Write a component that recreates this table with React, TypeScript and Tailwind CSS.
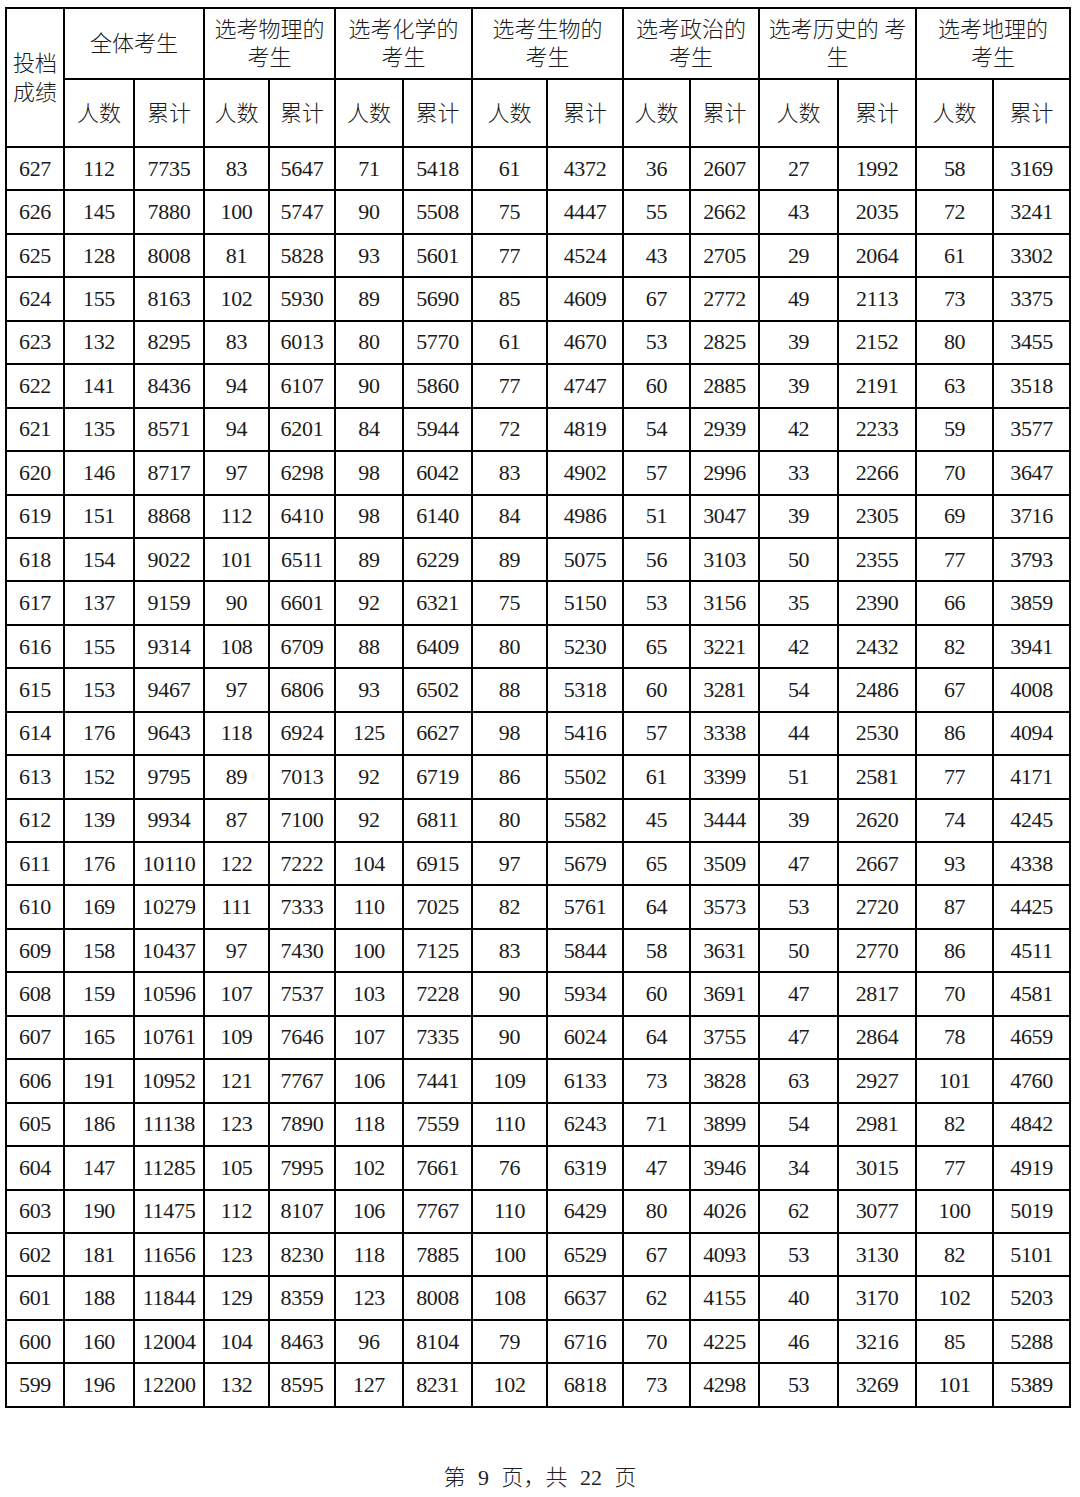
const rows: number[][] = [
  [627, 112, 7735, 83, 5647, 71, 5418, 61, 4372, 36, 2607, 27, 1992, 58, 3169],
  [626, 145, 7880, 100, 5747, 90, 5508, 75, 4447, 55, 2662, 43, 2035, 72, 3241],
  [625, 128, 8008, 81, 5828, 93, 5601, 77, 4524, 43, 2705, 29, 2064, 61, 3302],
  [624, 155, 8163, 102, 5930, 89, 5690, 85, 4609, 67, 2772, 49, 2113, 73, 3375],
  [623, 132, 8295, 83, 6013, 80, 5770, 61, 4670, 53, 2825, 39, 2152, 80, 3455],
  [622, 141, 8436, 94, 6107, 90, 5860, 77, 4747, 60, 2885, 39, 2191, 63, 3518],
  [621, 135, 8571, 94, 6201, 84, 5944, 72, 4819, 54, 2939, 42, 2233, 59, 3577],
  [620, 146, 8717, 97, 6298, 98, 6042, 83, 4902, 57, 2996, 33, 2266, 70, 3647],
  [619, 151, 8868, 112, 6410, 98, 6140, 84, 4986, 51, 3047, 39, 2305, 69, 3716],
  [618, 154, 9022, 101, 6511, 89, 6229, 89, 5075, 56, 3103, 50, 2355, 77, 3793],
  [617, 137, 9159, 90, 6601, 92, 6321, 75, 5150, 53, 3156, 35, 2390, 66, 3859],
  [616, 155, 9314, 108, 6709, 88, 6409, 80, 5230, 65, 3221, 42, 2432, 82, 3941],
  [615, 153, 9467, 97, 6806, 93, 6502, 88, 5318, 60, 3281, 54, 2486, 67, 4008],
  [614, 176, 9643, 118, 6924, 125, 6627, 98, 5416, 57, 3338, 44, 2530, 86, 4094],
  [613, 152, 9795, 89, 7013, 92, 6719, 86, 5502, 61, 3399, 51, 2581, 77, 4171],
  [612, 139, 9934, 87, 7100, 92, 6811, 80, 5582, 45, 3444, 39, 2620, 74, 4245],
  [611, 176, 10110, 122, 7222, 104, 6915, 97, 5679, 65, 3509, 47, 2667, 93, 4338],
  [610, 169, 10279, 111, 7333, 110, 7025, 82, 5761, 64, 3573, 53, 2720, 87, 4425],
  [609, 158, 10437, 97, 7430, 100, 7125, 83, 5844, 58, 3631, 50, 2770, 86, 4511],
  [608, 159, 10596, 107, 7537, 103, 7228, 90, 5934, 60, 3691, 47, 2817, 70, 4581],
  [607, 165, 10761, 109, 7646, 107, 7335, 90, 6024, 64, 3755, 47, 2864, 78, 4659],
  [606, 191, 10952, 121, 7767, 106, 7441, 109, 6133, 73, 3828, 63, 2927, 101, 4760],
  [605, 186, 11138, 123, 7890, 118, 7559, 110, 6243, 71, 3899, 54, 2981, 82, 4842],
  [604, 147, 11285, 105, 7995, 102, 7661, 76, 6319, 47, 3946, 34, 3015, 77, 4919],
  [603, 190, 11475, 112, 8107, 106, 7767, 110, 6429, 80, 4026, 62, 3077, 100, 5019],
  [602, 181, 11656, 123, 8230, 118, 7885, 100, 6529, 67, 4093, 53, 3130, 82, 5101],
  [601, 188, 11844, 129, 8359, 123, 8008, 108, 6637, 62, 4155, 40, 3170, 102, 5203],
  [600, 160, 12004, 104, 8463, 96, 8104, 79, 6716, 70, 4225, 46, 3216, 85, 5288],
  [599, 196, 12200, 132, 8595, 127, 8231, 102, 6818, 73, 4298, 53, 3269, 101, 5389],
];

const colWidths = [58, 70, 70, 65, 66, 68, 69, 75, 76, 67, 69, 79, 78, 77, 77];

const groups: [string, string][] = [
  ["选考物理的", "考生"],
  ["选考化学的", "考生"],
  ["选考生物的", "考生"],
  ["选考政治的", "考生"],
  ["选考历史的 考", "生"],
  ["选考地理的", "考生"],
];

const cell = "border-2 border-black p-0 text-center align-middle";

export default function App() {
  return (
    <div
      className="w-[1080px] h-[1497px] bg-white text-[#1a1a1a]"
      style={{ fontFamily: '"Liberation Serif", "Noto Sans CJK SC", serif' }}
    >
      <div className="pt-[7px] pl-[5px]">
        <table className="border-collapse table-fixed w-[1065px] text-[22px] font-light">
          <colgroup>
            {colWidths.map((w, i) => (
              <col key={i} style={{ width: w }} />
            ))}
          </colgroup>
          <thead>
            <tr className="h-[71px]">
              <th rowSpan={2} className={`${cell} font-light leading-[29px]`}>
                投档
                <br />
                成绩
              </th>
              <th colSpan={2} className={`${cell} font-light leading-[28px]`}>
                全体考生
              </th>
              {groups.map(([a, b]) => (
                <th key={a} colSpan={2} className={`${cell} font-light leading-[28px] whitespace-pre`}>
                  {a}
                  <br />
                  {b}
                </th>
              ))}
            </tr>
            <tr className="h-[68px]">
              {Array.from({ length: 7 }).flatMap((_, i) => [
                <th key={`n${i}`} className={`${cell} font-light`}>
                  人数
                </th>,
                <th key={`c${i}`} className={`${cell} font-light`}>
                  累计
                </th>,
              ])}
            </tr>
          </thead>
          <tbody>
            {rows.map((r) => (
              <tr key={r[0]} className="h-[43.45px]">
                {r.map((v, i) => (
                  <td key={i} className={`${cell} leading-none tracking-[-0.3px]`}>
                    {v}
                  </td>
                ))}
              </tr>
            ))}
          </tbody>
        </table>
      </div>
      <div className="mt-[59px] text-center text-[22px] font-light leading-none whitespace-pre [word-spacing:7px] text-[#222]">
        第 9 页，共 22 页
      </div>
    </div>
  );
}
